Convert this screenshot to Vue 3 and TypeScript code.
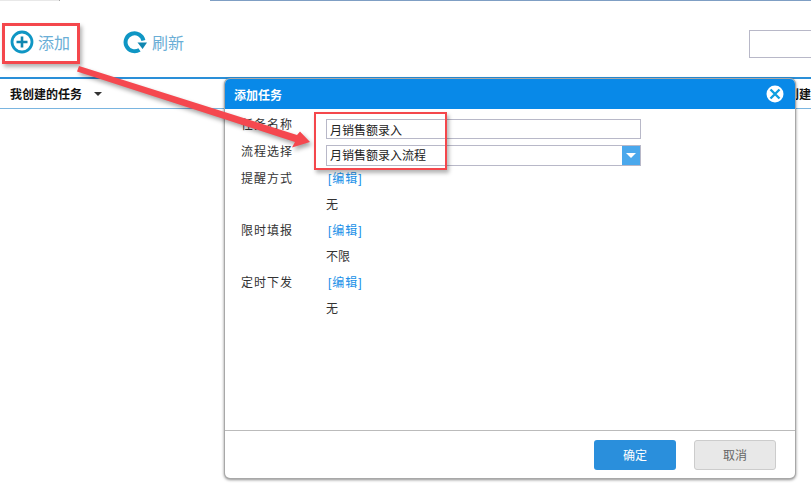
<script setup lang="ts">
const rows = [
  { label: '提醒方式', value: '无' },
  { label: '限时填报', value: '不限' },
  { label: '定时下发', value: '无' },
]
</script>

<template>
  <div class="page">
    <div class="topline"><div class="seg light"></div><div class="seg gap"></div><div class="seg rest"></div></div>
    <div class="toolbar">
      <div class="tool add">
        <svg width="24" height="24" viewBox="0 0 24 24"><circle cx="12" cy="12" r="10" fill="none" stroke="#0f96c4" stroke-width="2.8"/><path d="M12 6.5v11M6.5 12h11" stroke="#0f86b0" stroke-width="2.6"/></svg>
        <span>添加</span>
      </div>
      <div class="tool refresh">
        <svg width="24" height="24" viewBox="0 0 24 24"><path d="M20.4 10.5A9 9 0 1 0 16.5 19.8" fill="none" stroke="#0f96c4" stroke-width="4"/><path d="M14.5 12.5h9.5l-4.4 6.5z" fill="#0f86b0"/></svg>
        <span>刷新</span>
      </div>
      <div class="search"></div>
    </div>
    <div class="header">
      <span class="mine">我创建的任务</span><i class="caret"></i>
      <span class="right">创建</span>
    </div>

    <section class="dialog">
      <header class="title"><b>添加任务</b>
        <svg class="close" width="18" height="18" viewBox="0 0 18 18"><circle cx="9" cy="9" r="8.5" fill="#fff"/><path d="M4.5 4.5l9 9M13.5 4.5l-9 9" stroke="#0d9fe0" stroke-width="2.4"/></svg>
      </header>
      <div class="body">
        <div class="row"><label>任务名称</label><input class="field" value="月销售额录入" readonly /></div>
        <div class="row second"><label>流程选择</label>
          <div class="field select"><span>月销售额录入流程</span><i class="drop"></i></div>
        </div>
        <template v-for="r in rows" :key="r.label">
          <div class="row link"><label>{{ r.label }}</label><a>[编辑]</a></div>
          <div class="value">{{ r.value }}</div>
        </template>
      </div>
      <footer class="foot">
        <button class="ok">确定</button>
        <button class="cancel">取消</button>
      </footer>
    </section>

    <div class="mark box1"></div>
    <div class="mark box2"></div>
    <svg class="arrow" width="811" height="496" viewBox="0 0 811 496">
      <path d="M79 66L77 71.5L295 142L292 147.5L310 142L300 131.5L297 135Z" fill="#f5484f"/>
    </svg>
  </div>
</template>

<style>
html, body { margin: 0; background: #fff; }
</style>
<style scoped>
.page { position: relative; width: 811px; height: 496px; overflow: hidden; background: #fff; font-family: "Liberation Sans", "Noto Sans CJK SC", sans-serif; font-size: 12px; color: #333; }
.topline { display: flex; height: 1px; }
.seg.light { width: 60px; background: #e8e8e8; border-right: 1px solid #aaa; box-sizing: border-box; }
.seg.gap { width: 150px; }
.seg.rest { flex: 1; background: #7f9fc4; }
.toolbar { height: 78px; box-sizing: border-box; display: flex; align-items: center; padding: 6px 0 0 10px; border-bottom: 2px solid #2a8fd8; }
.tool { display: flex; align-items: center; gap: 4px; font-size: 16px; color: #6aaed6; }
.refresh { margin-left: 53px; gap: 5px; }
.search { margin: 23px -10px 0 auto; align-self: flex-start; width: 72px; height: 28px; border: 1px solid #b8b8c8; box-sizing: border-box; }
.header { height: 30px; box-sizing: border-box; display: flex; align-items: center; padding-left: 10px; border-bottom: 1px solid #7ab5e0; font-weight: 700; color: #111; }
.caret { margin-left: 12px; border: 4px solid transparent; border-top-color: #333; border-bottom: 0; }
.right { margin-left: auto; white-space: nowrap; }
.dialog { position: absolute; left: 225px; top: 79px; width: 570px; height: 399px; display: flex; flex-direction: column; background: #fff; border-radius: 5px; box-shadow: 0 0 0 1px #a8a8a8, 0 1px 3px 1px rgba(0,0,0,.45); overflow: hidden; }
.title { height: 30px; flex: none; display: flex; align-items: center; justify-content: space-between; padding: 0 11px 0 9px; background: #0889e8; color: #fff; }
.body { flex: 1; padding: 10px 0 0 16px; line-height: 12px; }
.row { display: flex; align-items: flex-start; height: 26px; }
.second { height: 27px; }
.second label { padding-top: 1px; }
.link { height: 25px; padding-top: 1px; }
label { width: 85px; letter-spacing: 1px; flex: none; }
.field { box-sizing: border-box; width: 315px; height: 20px; border: 1px solid #b8b8c8; padding: 0 3px; font: inherit; color: #222; outline: none; }
.select { height: 21px; display: flex; align-items: center; justify-content: space-between; padding-right: 0; }
.drop { position: relative; width: 18px; height: 19px; background: #4aa8ec; }
.drop::after { content: ""; position: absolute; left: 4px; top: 7px; border: 5px solid transparent; border-top: 5px solid #fff; border-bottom: 0; }
.link a { color: #2090e8; margin-left: 2px; letter-spacing: 1px; }
.value { height: 25px; padding-top: 1px; margin-left: 85px; }
.foot { height: 48px; box-sizing: border-box; flex: none; display: flex; justify-content: flex-end; align-items: center; gap: 18px; padding-right: 19px; border-top: 1px solid #bbb; }
button { width: 82px; height: 30px; border-radius: 3px; font: inherit; }
.ok { background: #2a8fdc; color: #fff; border: 0; }
.cancel { background: #e8e8e8; color: #666; border: 1px solid #ccc; }
.mark { position: absolute; border: 2px solid #f4474c; box-shadow: 2px 3px 4px rgba(0,0,0,.3); }
.box1 { left: 2px; top: 23px; width: 72px; height: 35px; border-width: 3px; }
.box2 { left: 314px; top: 112px; width: 129px; height: 54px; }
.arrow { position: absolute; left: 0; top: 0; pointer-events: none; filter: drop-shadow(2px 3px 2px rgba(0,0,0,.35)); }
</style>
